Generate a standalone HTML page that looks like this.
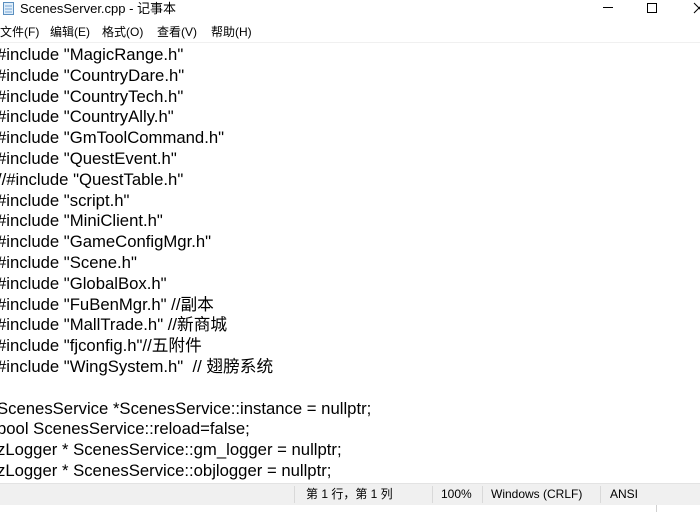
<!DOCTYPE html>
<html><head><meta charset="utf-8"><style>
body{margin:0;width:700px;height:512px;overflow:hidden;background:#fff;position:relative;font-family:"Liberation Sans","Noto Sans CJK SC",sans-serif;}
.title{position:absolute;left:0;top:0;width:700px;height:20px;}
.title .t{position:absolute;left:20px;top:0px;font-size:13px;color:#000;line-height:17px;}
.menu{position:absolute;left:0;top:22px;height:20px;font-size:12px;line-height:20px;}
.menu span{position:absolute;top:0;white-space:nowrap}
.sep{position:absolute;left:0;top:42px;width:700px;height:1px;background:#f0f0f0}
.code{position:absolute;left:-3px;top:45px;font-size:16.7px;line-height:20.8px;white-space:pre;color:#000;}
.status{position:absolute;left:0;top:483px;width:700px;height:21px;background:#f0f0f0;border-top:1px solid #e3e3e3;font-size:12px;line-height:21px;}
.status span{position:absolute;top:0}
.status i{position:absolute;top:2px;width:1px;height:17px;background:#d9d9d9}
</style></head><body>
<div class="title">
<svg style="position:absolute;left:2px;top:1px" width="13" height="15" viewBox="0 0 13 15"><rect x="1.5" y="1.5" width="10" height="12" fill="#dfeefa" stroke="#5b8fbf"/><line x1="3" y1="5" x2="10" y2="5" stroke="#7aa7d6"/><line x1="3" y1="8" x2="10" y2="8" stroke="#7aa7d6"/><line x1="3" y1="11" x2="10" y2="11" stroke="#7aa7d6"/></svg>
<div class="t">ScenesServer.cpp - 记事本</div>
<svg style="position:absolute;left:600px;top:0" width="100" height="18"><line x1="3" y1="7.5" x2="13" y2="7.5" stroke="#000"/><rect x="47.5" y="3.5" width="9" height="9" fill="none" stroke="#000"/><line x1="94" y1="3" x2="104" y2="13" stroke="#000"/><line x1="104" y1="3" x2="94" y2="13" stroke="#000"/></svg>
</div>
<div class="menu"><span style="left:0">文件(F)</span><span style="left:50px">编辑(E)</span><span style="left:102px">格式(O)</span><span style="left:157px">查看(V)</span><span style="left:211px">帮助(H)</span></div>
<div class="sep"></div>
<div class="code">#include "MagicRange.h"
#include "CountryDare.h"
#include "CountryTech.h"
#include "CountryAlly.h"
#include "GmToolCommand.h"
#include "QuestEvent.h"
//#include "QuestTable.h"
#include "script.h"
#include "MiniClient.h"
#include "GameConfigMgr.h"
#include "Scene.h"
#include "GlobalBox.h"
#include "FuBenMgr.h" //副本
#include "MallTrade.h" //新商城
#include "fjconfig.h"//五附件
#include "WingSystem.h"  // 翅膀系统

ScenesService *ScenesService::instance = nullptr;
bool ScenesService::reload=false;
zLogger * ScenesService::gm_logger = nullptr;
zLogger * ScenesService::objlogger = nullptr;</div>
<div class="status">
<i style="left:294px"></i><span style="left:306px">第 1 行，第 1 列</span>
<i style="left:432px"></i><span style="left:441px">100%</span>
<i style="left:482px"></i><span style="left:491px">Windows (CRLF)</span>
<i style="left:600px"></i><span style="left:610px">ANSI</span>
</div>
<div style="position:absolute;left:0;top:505px;width:700px;height:7px;background:#fff"></div>
<div style="position:absolute;left:656px;top:505px;width:1px;height:7px;background:#d0d0d0"></div>
</body></html>
